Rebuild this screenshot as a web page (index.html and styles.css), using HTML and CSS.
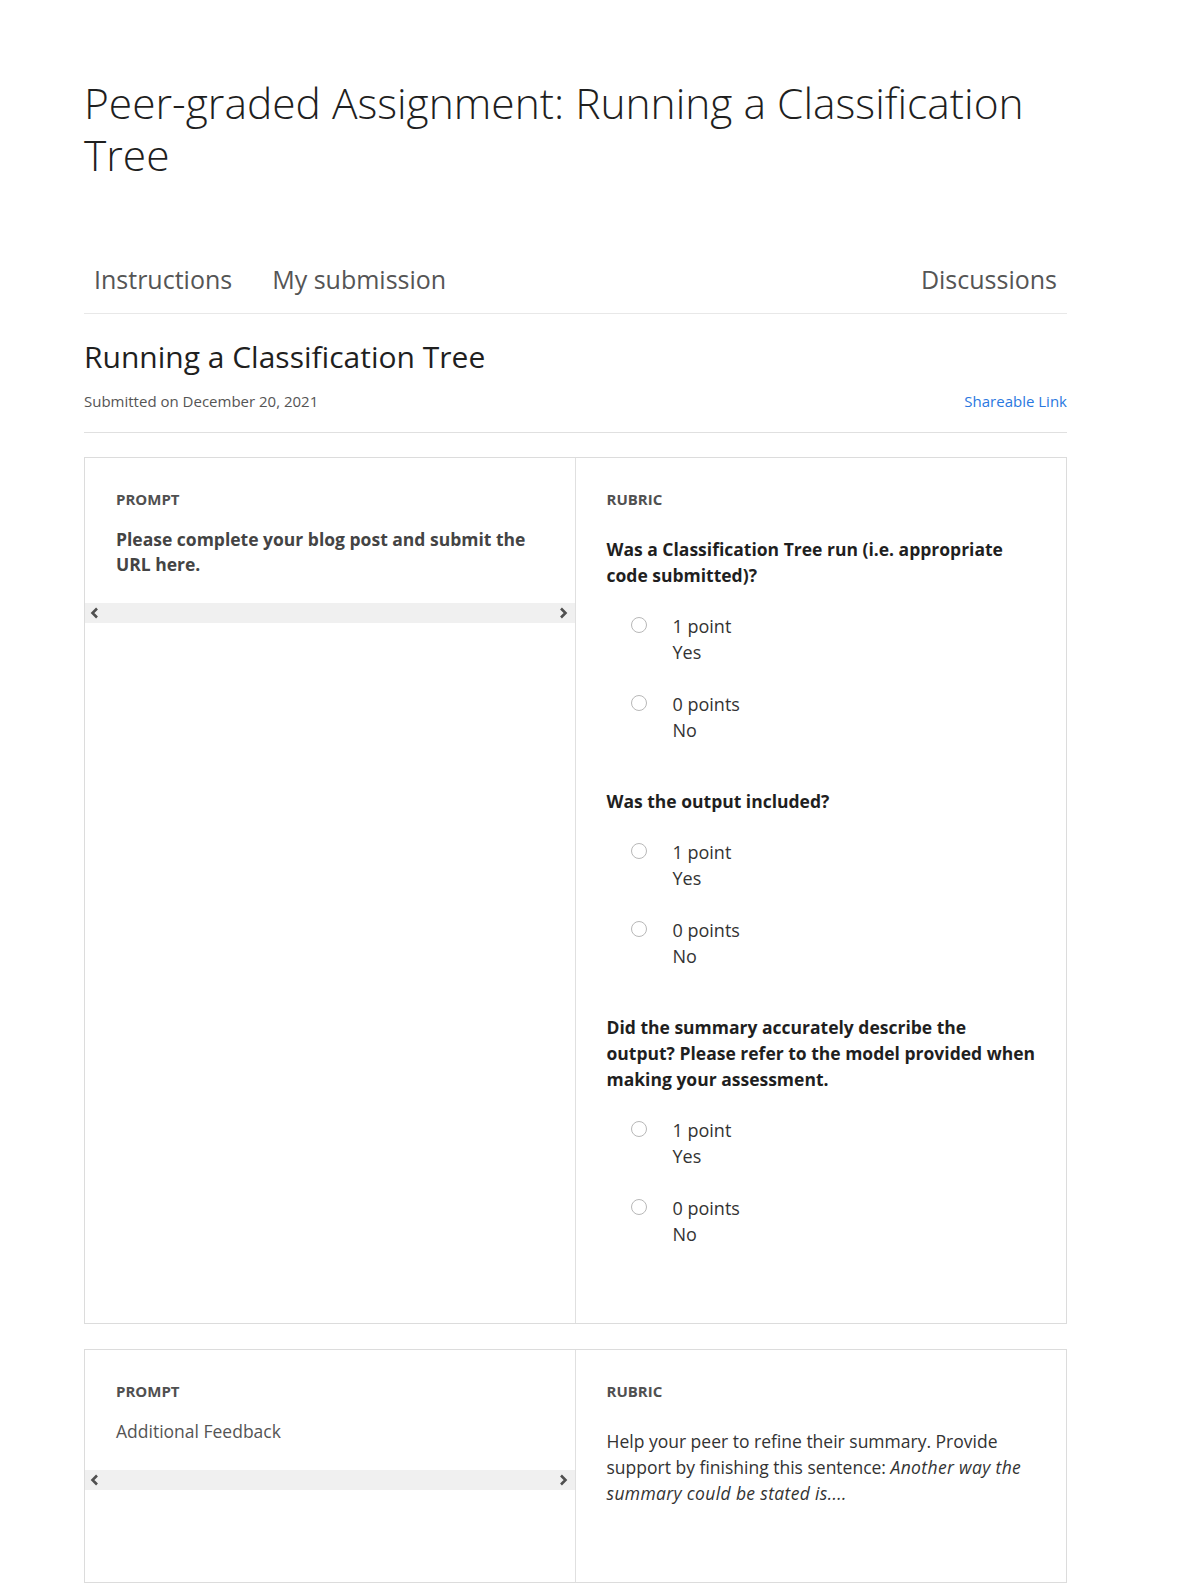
FILE: index.html
```html
<!DOCTYPE html>
<html lang="en">
<head>
<meta charset="utf-8">
<title>Peer-graded Assignment: Running a Classification Tree</title>
<link rel="stylesheet" href="styles.css">
</head>
<body>
<main class="page">
  <h1 class="page-title">Peer-graded Assignment: Running a Classification Tree</h1>

  <nav class="tabs">
    <a class="tab">Instructions</a>
    <a class="tab">My submission</a>
    <a class="tab tab-right">Discussions</a>
  </nav>

  <header class="sub-head">
    <h2 class="sub-title">Running a Classification Tree</h2>
    <div class="sub-meta">
      <span class="sub-date">Submitted on December 20, 2021</span>
      <a class="share-link">Shareable Link</a>
    </div>
  </header>

  <section class="card">
    <div class="cell cell-prompt">
      <div class="cell-inner">
        <div class="label">PROMPT</div>
        <p class="prompt-text prompt-bold">Please complete your blog post and submit the URL here.</p>
      </div>
      <div class="hscroll">
        <span class="chev chev-left"><svg width="9" height="12" viewBox="0 0 9 12"><path d="M7 1.5 L2.5 6 L7 10.5" fill="none" stroke="#505050" stroke-width="2.6"/></svg></span>
        <span class="chev chev-right"><svg width="9" height="12" viewBox="0 0 9 12"><path d="M2 1.5 L6.5 6 L2 10.5" fill="none" stroke="#505050" stroke-width="2.6"/></svg></span>
      </div>
    </div>
    <div class="cell cell-rubric">
      <div class="cell-inner">
        <div class="label">RUBRIC</div>
        <div class="question">
          <p class="q-text">Was a Classification Tree run (i.e. appropriate code submitted)?</p>
          <div class="option"><span class="radio"></span><div class="opt-text"><div>1 point</div><div>Yes</div></div></div>
          <div class="option"><span class="radio"></span><div class="opt-text"><div>0 points</div><div>No</div></div></div>
        </div>
        <div class="question">
          <p class="q-text">Was the output included?</p>
          <div class="option"><span class="radio"></span><div class="opt-text"><div>1 point</div><div>Yes</div></div></div>
          <div class="option"><span class="radio"></span><div class="opt-text"><div>0 points</div><div>No</div></div></div>
        </div>
        <div class="question">
          <p class="q-text">Did the summary accurately describe the output? Please refer to the model provided when making your assessment.</p>
          <div class="option"><span class="radio"></span><div class="opt-text"><div>1 point</div><div>Yes</div></div></div>
          <div class="option"><span class="radio"></span><div class="opt-text"><div>0 points</div><div>No</div></div></div>
        </div>
      </div>
    </div>
  </section>

  <section class="card">
    <div class="cell cell-prompt">
      <div class="cell-inner">
        <div class="label">PROMPT</div>
        <p class="prompt-text">Additional Feedback</p>
      </div>
      <div class="hscroll">
        <span class="chev chev-left"><svg width="9" height="12" viewBox="0 0 9 12"><path d="M7 1.5 L2.5 6 L7 10.5" fill="none" stroke="#505050" stroke-width="2.6"/></svg></span>
        <span class="chev chev-right"><svg width="9" height="12" viewBox="0 0 9 12"><path d="M2 1.5 L6.5 6 L2 10.5" fill="none" stroke="#505050" stroke-width="2.6"/></svg></span>
      </div>
    </div>
    <div class="cell cell-rubric">
      <div class="cell-inner">
        <div class="label">RUBRIC</div>
        <div class="question">
          <p class="q-plain">Help your peer to refine their summary. Provide support by finishing this sentence: <em>Another way the summary could be stated is....</em></p>
        </div>
      </div>
    </div>
  </section>
</main>
</body>
</html>
```

FILE: styles.css
```css
html, body {
  margin: 0;
  padding: 0;
  background: #fff;
}
body {
  font-family: "Open Sans", "Noto Sans", sans-serif;
  color: #1f1f1f;
}
.page {
  margin-left: 84px;
  width: 983px;
  padding-top: 77px;
  padding-bottom: 10px;
}
.page-title {
  margin: 0;
  font-size: 42.5px;
  line-height: 52px;
  font-weight: 300;
  color: #1f1f1f;
  width: 983px;
}
.tabs {
  display: flex;
  margin-top: 82px;
  padding: 0 10px 18px 10px;
  border-bottom: 1px solid #e8e8e8;
  gap: 40px;
}
.tab {
  font-size: 25px;
  line-height: 32px;
  color: #555;
  cursor: pointer;
}
.tab-right {
  margin-left: auto;
}
.sub-head {
  padding-top: 23px;
  padding-bottom: 21px;
  border-bottom: 1px solid #e0e0e0;
}
.sub-title {
  margin: 0;
  font-size: 30px;
  line-height: 40px;
  font-weight: 400;
  color: #1f1f1f;
}
.sub-meta {
  display: flex;
  justify-content: space-between;
  margin-top: 14px;
  font-size: 15px;
  line-height: 20px;
}
.sub-date {
  color: #555;
}
.share-link {
  color: #2a78e0;
  cursor: pointer;
}
.card {
  display: grid;
  grid-template-columns: 1fr 1fr;
  border: 1px solid #dcdcdc;
  margin-top: 24px;
}
.card + .card {
  margin-top: 25px;
}
.cell-prompt {
  border-right: 1px solid #e0e0e0;
}
.cell-inner {
  padding: 31px 31px 0 31px;
}
.cell-rubric .cell-inner {
  padding-bottom: 31px;
}
.label {
  font-size: 15px;
  line-height: 20px;
  font-weight: 700;
  color: #505050;
}
.prompt-text {
  margin: 18px 0 0 0;
  font-size: 17.5px;
  line-height: 25px;
  color: #555;
}
.prompt-bold {
  font-weight: 700;
  color: #444;
}
.hscroll {
  position: relative;
  height: 20px;
  margin-top: 26px;
  background: #f0f0f0;
}
.chev {
  position: absolute;
  top: 4px;
  width: 9px;
  height: 12px;
  display: block;
}
.chev svg {
  display: block;
}
.chev-left {
  left: 5px;
}
.chev-right {
  right: 7px;
}
.question {
  margin-top: 27px;
  margin-bottom: 45px;
}
.question + .question {
  margin-top: 0;
}
.q-text {
  margin: 0 0 25px 0;
  font-size: 17.5px;
  line-height: 26px;
  font-weight: 700;
  color: #1f1f1f;
}
.q-plain {
  margin: 0 0 2px 0;
  font-size: 17.5px;
  line-height: 26px;
  color: #333;
}
.q-plain em {
  font-style: italic;
  letter-spacing: 0.35px;
}
.option {
  display: flex;
  align-items: flex-start;
  margin-left: 24px;
  font-size: 18px;
  line-height: 26px;
  color: #333;
}
.option + .option {
  margin-top: 26px;
}
.radio {
  width: 14px;
  height: 14px;
  border: 1.6px solid #b8b8b8;
  border-radius: 50%;
  margin-top: 4px;
  margin-right: 26px;
  flex: none;
}
```
